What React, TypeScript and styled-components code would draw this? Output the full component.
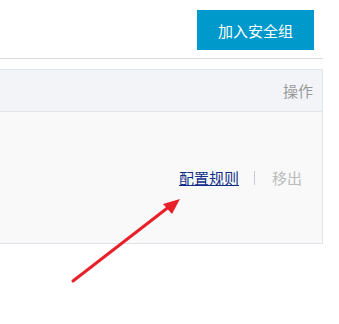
import React from "react";
import styled, { createGlobalStyle } from "styled-components";

const Global = createGlobalStyle`
  html, body { margin: 0; padding: 0; background: #fff; }
  body { font-family: "Noto Sans CJK SC", "Noto Sans", sans-serif; }
`;

const Page = styled.div`
  position: relative;
  width: 323px;
  height: 324px;
`;

const Toolbar = styled.div`
  display: flex;
  justify-content: flex-end;
  padding: 10px 9px 8px 0;
  border-bottom: 1px solid #dcdcdc;
`;

const PrimaryButton = styled.button`
  width: 117px;
  height: 40px;
  border: none;
  background: #0099cc;
  color: #fff;
  font-family: "Noto Sans CJK SC", sans-serif;
  font-size: 15px;
  padding: 0;
  cursor: pointer;
`;

const Table = styled.div`
  margin-top: 10px;
  border: 1px solid #dfe4ea;
  border-left: none;
`;

const HeaderRow = styled.div`
  display: flex;
  align-items: center;
  justify-content: flex-end;
  height: 41px;
  padding-right: 9px;
  background: #f3f4f8;
  border-bottom: 1px solid #dfe4ea;
`;

const HeaderCell = styled.span`
  font-size: 15px;
  color: #999;
`;

const BodyRow = styled.div`
  display: flex;
  align-items: center;
  justify-content: flex-end;
  height: 131px;
  padding-right: 20px;
  background: #f9f9f9;
`;

const Actions = styled.div`
  display: flex;
  align-items: center;
  font-size: 15px;
`;

const LinkAction = styled.a<{ $disabled?: boolean }>`
  color: ${(p) => (p.$disabled ? "#bbb" : "#12308a")};
  text-decoration: ${(p) => (p.$disabled ? "none" : "underline")};
  text-underline-offset: 1px;
  cursor: pointer;
`;

const Divider = styled.span`
  width: 1px;
  height: 14px;
  margin: 0 17px 0 15px;
  background: #c9cdd3;
`;

const ArrowOverlay = styled.svg`
  position: absolute;
  left: 0;
  top: 0;
  pointer-events: none;
`;

export default function App() {
  return (
    <Page>
      <Global />
      <Toolbar>
        <PrimaryButton>加入安全组</PrimaryButton>
      </Toolbar>
      <Table>
        <HeaderRow>
          <HeaderCell>操作</HeaderCell>
        </HeaderRow>
        <BodyRow>
          <Actions>
            <LinkAction>配置规则</LinkAction>
            <Divider />
            <LinkAction $disabled>移出</LinkAction>
          </Actions>
        </BodyRow>
      </Table>
      <ArrowOverlay width="339" height="324" viewBox="0 0 339 324">
        <line x1="73" y1="281" x2="170" y2="206" stroke="#e8202a" strokeWidth="3" strokeLinecap="round" />
        <polygon points="180,199 163,204 172,214" fill="#e8202a" />
      </ArrowOverlay>
    </Page>
  );
}
